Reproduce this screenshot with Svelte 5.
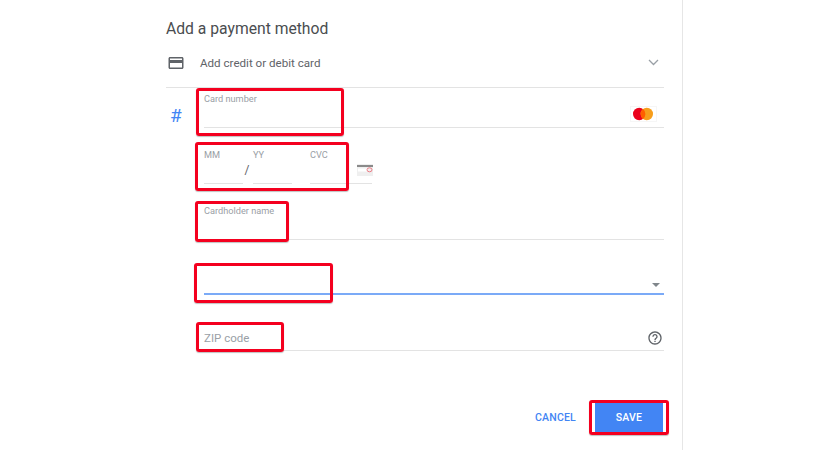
<script>
	const marks = [
		{ name: 'number', x: 196, y: 88, w: 148, h: 48 },
		{ name: 'expiry', x: 195, y: 142, w: 154, h: 49 },
		{ name: 'holder', x: 195, y: 201, w: 94, h: 41 },
		{ name: 'country', x: 194, y: 263, w: 139, h: 40 },
		{ name: 'zip', x: 196, y: 322, w: 88, h: 30 },
		{ name: 'save', x: 589, y: 400, w: 80, h: 35 }
	];
</script>

<div class="page">
	<div class="panel">
		<h2>Add a payment method</h2>

		<div class="method">
			<svg class="card-icon" width="18" height="18" viewBox="0 0 24 24">
				<path fill="#5f6368" d="M20 4H4c-1.11 0-2 .89-2 2v12c0 1.11.89 2 2 2h16c1.11 0 2-.89 2-2V6c0-1.11-.89-2-2-2zm0 14H4v-6h16v6zm0-10H4V6h16v2z" />
			</svg>
			<span>Add credit or debit card</span>
			<svg class="chevron" width="11" height="7" viewBox="0 0 11 7">
				<path d="M1 1l4.5 4.5L10 1" fill="none" stroke="#9aa0a6" stroke-width="1.3" />
			</svg>
		</div>

		<div class="form">
			<div class="field number">
				<span class="hash">#</span>
				<label for="card-number">Card number</label>
				<input id="card-number" type="text" />
				<svg class="brand" width="27" height="16" viewBox="0 0 27 16">
					<rect x="0.5" y="0.5" width="26" height="15" fill="#fff" stroke="#f6f6f6" />
					<circle cx="9.2" cy="8" r="6.2" fill="#eb001b" />
					<circle cx="16.8" cy="8" r="6.2" fill="#f79e1b" />
					<path d="M13 3.1a6.2 6.2 0 0 1 0 9.8a6.2 6.2 0 0 1 0-9.8z" fill="#ff5f00" />
				</svg>
			</div>

			<div class="expiry">
				<div class="part mm">
					<label for="mm">MM</label>
					<input id="mm" type="text" />
				</div>
				<span class="slash">/</span>
				<div class="part yy">
					<label for="yy">YY</label>
					<input id="yy" type="text" />
				</div>
				<div class="part cvc">
					<label for="cvc">CVC</label>
					<input id="cvc" type="text" />
					<svg class="cvc-icon" width="16" height="12" viewBox="0 0 16 12">
						<rect width="16" height="12" fill="#efefef" />
						<rect y="1" width="16" height="2" fill="#8a8a8a" />
						<rect x="1" y="4.5" width="10" height="3" fill="#fff" />
						<ellipse cx="12.5" cy="5.8" rx="2.5" ry="2" fill="none" stroke="#e8606b" stroke-width="0.8" />
					</svg>
				</div>
			</div>

			<div class="field holder">
				<label for="holder">Cardholder name</label>
				<input id="holder" type="text" />
			</div>

			<div class="field country">
				<span class="arrow"></span>
			</div>

			<div class="field zip">
				<span class="zip-label">ZIP code</span>
				<svg class="help" width="16" height="16" viewBox="0 0 24 24">
					<path fill="#5f6368" d="M11 18h2v-2h-2v2zm1-16C6.48 2 2 6.48 2 12s4.48 10 10 10 10-4.48 10-10S17.52 2 12 2zm0 18c-4.41 0-8-3.59-8-8s3.59-8 8-8 8 3.59 8 8-3.59 8-8 8zm0-14c-2.21 0-4 1.79-4 4h2c0-1.1.9-2 2-2s2 .9 2 2c0 2-3 1.75-3 5h2c0-2.25 3-2.5 3-5 0-2.21-1.79-4-4-4z" />
				</svg>
			</div>
		</div>

		<div class="actions">
			<button class="cancel">CANCEL</button>
			<button class="save">SAVE</button>
		</div>
	</div>

	{#each marks as m (m.name)}
		<div class="mark" style="left:{m.x}px;top:{m.y}px;width:{m.w}px;height:{m.h}px"></div>
	{/each}
</div>

<style>
	:global(body) {
		margin: 0;
		background: #fff;
		font-family: Roboto, 'Liberation Sans', sans-serif;
	}

	.page {
		position: relative;
		width: 830px;
		height: 450px;
		overflow: hidden;
	}

	.panel {
		box-sizing: border-box;
		width: 683px;
		height: 450px;
		padding: 19px 18px 0 166px;
		border-right: 1.5px solid #e6e6e6;
	}

	h2 {
		margin: 0;
		font-size: 15.7px;
		line-height: 19px;
		font-weight: 400;
		color: #4a4d50;
	}

	.method {
		display: flex;
		align-items: center;
		height: 49px;
		border-bottom: 1px solid #e3e3e3;
		font-size: 11.6px;
		color: #5f6368;
	}

	.card-icon {
		margin-left: 1px;
		margin-right: 15px;
	}

	.chevron {
		margin-left: auto;
		margin-right: 5px;
	}

	.form {
		padding-left: 38px;
	}

	.field {
		position: relative;
		border-bottom: 1px solid #e3e3e3;
		box-sizing: border-box;
	}

	label,
	.zip-label {
		display: block;
		color: #9aa0a6;
		font-size: 9.2px;
		line-height: 11px;
	}

	input {
		display: block;
		width: 100%;
		box-sizing: border-box;
		border: none;
		outline: none;
		background: transparent;
		padding: 0;
	}

	.number {
		height: 40px;
		padding-top: 5px;
	}

	.number input,
	.holder input {
		height: 20px;
	}

	.hash {
		position: absolute;
		left: -34px;
		top: 17px;
		font-size: 19px;
		line-height: 22px;
		color: #4285f4;
	}

	.brand {
		position: absolute;
		right: 7px;
		top: 18px;
	}

	.expiry {
		display: flex;
		align-items: flex-start;
		height: 56px;
		padding-top: 21px;
		box-sizing: border-box;
	}

	.part {
		position: relative;
		height: 35px;
		border-bottom: 1px solid #e3e3e3;
		box-sizing: border-box;
	}

	.part input {
		height: 18px;
	}

	.mm {
		width: 39px;
	}

	.slash {
		width: 8px;
		padding-top: 14px;
		margin-right: 2px;
		font-size: 12px;
		line-height: 14px;
		color: #5f6368;
		text-align: center;
	}

	.yy {
		width: 39px;
		margin-right: 18px;
	}

	.cvc {
		width: 62px;
	}

	.cvc-icon {
		position: absolute;
		right: -1px;
		top: 15px;
	}

	.holder {
		height: 56px;
		padding-top: 21px;
	}

	.country {
		height: 55px;
		border-bottom: 2px solid #7baaf7;
	}

	.arrow {
		position: absolute;
		right: 4px;
		top: 43px;
		width: 0;
		height: 0;
		border-left: 4.5px solid transparent;
		border-right: 4.5px solid transparent;
		border-top: 4.5px solid #80868b;
	}

	.zip {
		display: flex;
		align-items: center;
		justify-content: space-between;
		height: 56px;
		padding-top: 31px;
	}

	.zip-label {
		font-size: 11.5px;
		line-height: 14px;
	}

	.help {
		margin-right: 1px;
	}

	.actions {
		display: flex;
		justify-content: flex-end;
		align-items: center;
		gap: 19px;
		margin-top: 52px;
	}

	button {
		border: none;
		padding: 0;
		font-family: inherit;
		font-size: 10.5px;
		font-weight: 500;
		letter-spacing: 0.2px;
	}

	.cancel {
		background: none;
		color: #4285f4;
	}

	.save {
		width: 68px;
		height: 29px;
		margin-right: 1px;
		background: #4285f4;
		color: #fff;
	}

	.mark {
		position: absolute;
		box-sizing: border-box;
		border: 3px solid #f4001f;
		border-radius: 3px;
		box-shadow: 0 1px 1px rgba(0, 0, 0, 0.25);
	}
</style>
